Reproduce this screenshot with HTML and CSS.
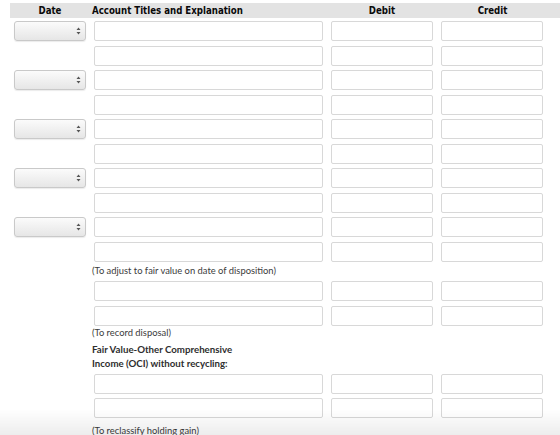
FILE: index.html
```html
<!DOCTYPE html>
<html lang="en">
<head>
    <meta charset="UTF-8">
    <meta name="viewport" content="width=device-width, initial-scale=1.0">
    <title>Journal Entries</title>
    <link rel="stylesheet" href="styles.css">
</head>
<body>
    <div class="journal">
        <!-- column headings -->
        <div class="row head">
            <div class="cell center">Date</div>
            <div class="cell title">Account Titles and Explanation</div>
            <div class="cell center">Debit</div>
            <div class="cell center">Credit</div>
        </div>

        <div class="rows first">
            <div class="row"><div class="cell"><div class="date-select"><svg width="5" height="8" viewBox="0 0 5 8"><path d="M2.5 0.5 L4.5 3 L0.5 3 Z M2.5 7.5 L4.5 5 L0.5 5 Z" fill="#555"/></svg></div></div><div class="cell"><input class="field"></div><div class="cell"><input class="field"></div><div class="cell last"><input class="field"></div></div>
            <div class="row"><div class="cell"></div><div class="cell"><input class="field"></div><div class="cell"><input class="field"></div><div class="cell last"><input class="field"></div></div>
            <div class="row"><div class="cell"><div class="date-select"><svg width="5" height="8" viewBox="0 0 5 8"><path d="M2.5 0.5 L4.5 3 L0.5 3 Z M2.5 7.5 L4.5 5 L0.5 5 Z" fill="#555"/></svg></div></div><div class="cell"><input class="field"></div><div class="cell"><input class="field"></div><div class="cell last"><input class="field"></div></div>
            <div class="row"><div class="cell"></div><div class="cell"><input class="field"></div><div class="cell"><input class="field"></div><div class="cell last"><input class="field"></div></div>
            <div class="row"><div class="cell"><div class="date-select"><svg width="5" height="8" viewBox="0 0 5 8"><path d="M2.5 0.5 L4.5 3 L0.5 3 Z M2.5 7.5 L4.5 5 L0.5 5 Z" fill="#555"/></svg></div></div><div class="cell"><input class="field"></div><div class="cell"><input class="field"></div><div class="cell last"><input class="field"></div></div>
            <div class="row"><div class="cell"></div><div class="cell"><input class="field"></div><div class="cell"><input class="field"></div><div class="cell last"><input class="field"></div></div>
            <div class="row"><div class="cell"><div class="date-select"><svg width="5" height="8" viewBox="0 0 5 8"><path d="M2.5 0.5 L4.5 3 L0.5 3 Z M2.5 7.5 L4.5 5 L0.5 5 Z" fill="#555"/></svg></div></div><div class="cell"><input class="field"></div><div class="cell"><input class="field"></div><div class="cell last"><input class="field"></div></div>
            <div class="row"><div class="cell"></div><div class="cell"><input class="field"></div><div class="cell"><input class="field"></div><div class="cell last"><input class="field"></div></div>
            <div class="row"><div class="cell"><div class="date-select"><svg width="5" height="8" viewBox="0 0 5 8"><path d="M2.5 0.5 L4.5 3 L0.5 3 Z M2.5 7.5 L4.5 5 L0.5 5 Z" fill="#555"/></svg></div></div><div class="cell"><input class="field"></div><div class="cell"><input class="field"></div><div class="cell last"><input class="field"></div></div>
            <div class="row"><div class="cell"></div><div class="cell"><input class="field"></div><div class="cell"><input class="field"></div><div class="cell last"><input class="field"></div></div>
        </div>

        <div class="note note-adjust">(To adjust to fair value on date of disposition)</div>

        <div class="rows">
            <div class="row"><div class="cell"></div><div class="cell"><input class="field"></div><div class="cell"><input class="field"></div><div class="cell last"><input class="field"></div></div>
            <div class="row"><div class="cell"></div><div class="cell"><input class="field"></div><div class="cell"><input class="field"></div><div class="cell last"><input class="field"></div></div>
        </div>

        <div class="note note-disposal">(To record disposal)</div>
        <div class="note subhead">Fair Value-Other Comprehensive<br>Income (OCI) without recycling:</div>

        <div class="rows">
            <div class="row"><div class="cell"></div><div class="cell"><input class="field"></div><div class="cell"><input class="field"></div><div class="cell last"><input class="field"></div></div>
            <div class="row"><div class="cell"></div><div class="cell"><input class="field"></div><div class="cell"><input class="field"></div><div class="cell last"><input class="field"></div></div>
        </div>

        <div class="note note-reclass">(To reclassify holding gain)</div>
    </div>

    <div class="bottom-shade"></div>
</body>
</html>
```

FILE: styles.css
```css
*{
    margin: 0;
    padding: 0;
    box-sizing: border-box
}

html, body{
    overflow: hidden;
}

body{
    background-color: #fff;
    font-family: Lato, "Open Sans", sans-serif;
    color: #333;
}

.journal{
    padding: 3px 0 0 10px;
}

.row{
    display: grid;
    grid-template-columns: 80px 237px 110px 111px;
}

.cell{
    padding: 0 4px;
}

.cell.last{
    padding-right: 5px;
}

.head{
    height: 15px;
    background-color: #e3e3e3;
    font-family: "DejaVu Sans Condensed", "DejaVu Sans", Verdana, sans-serif;
    font-weight: bold;
    font-size: 9.6px;
    line-height: 15px;
    color: #0a0a0a;
}

.head .center{
    text-align: center;
}

.head .title{
    padding-left: 2px;
}

.rows .row{
    margin-top: 4.5px;
}

.rows.first .row:first-child{
    margin-top: 3px;
}

.field{
    display: block;
    width: 100%;
    height: 20px;
    border: 1px solid #d8d8d8;
    border-radius: 2px;
    background-color: #fff;
    outline: none;
}

.date-select{
    height: 20px;
    border: 1px solid #c9c9c9;
    border-radius: 3px;
    background: linear-gradient(#fbfbfb, #e6e6e6);
    box-shadow: 0 1px 1px rgba(0, 0, 0, 0.08);
    display: flex;
    align-items: center;
    justify-content: flex-end;
    padding-right: 4px;
}

.note{
    margin-left: 82px;
    font-size: 9.4px;
    line-height: 14px;
    color: #3b3b3b;
}

.note-adjust{
    margin-top: 2px;
    margin-bottom: -1px;
}

.note-disposal{
    margin-top: 0;
}

.subhead{
    margin-top: 2px;
    margin-bottom: -0.5px;
    font-size: 9.7px;
    font-weight: bold;
    color: #2e2e2e;
}

.note-reclass{
    margin-top: 5.5px;
}

.bottom-shade{
    position: fixed;
    left: 0;
    right: 0;
    bottom: 0;
    height: 26px;
    background: linear-gradient(rgba(0, 0, 0, 0), rgba(0, 0, 0, 0.07));
    pointer-events: none;
}
```
